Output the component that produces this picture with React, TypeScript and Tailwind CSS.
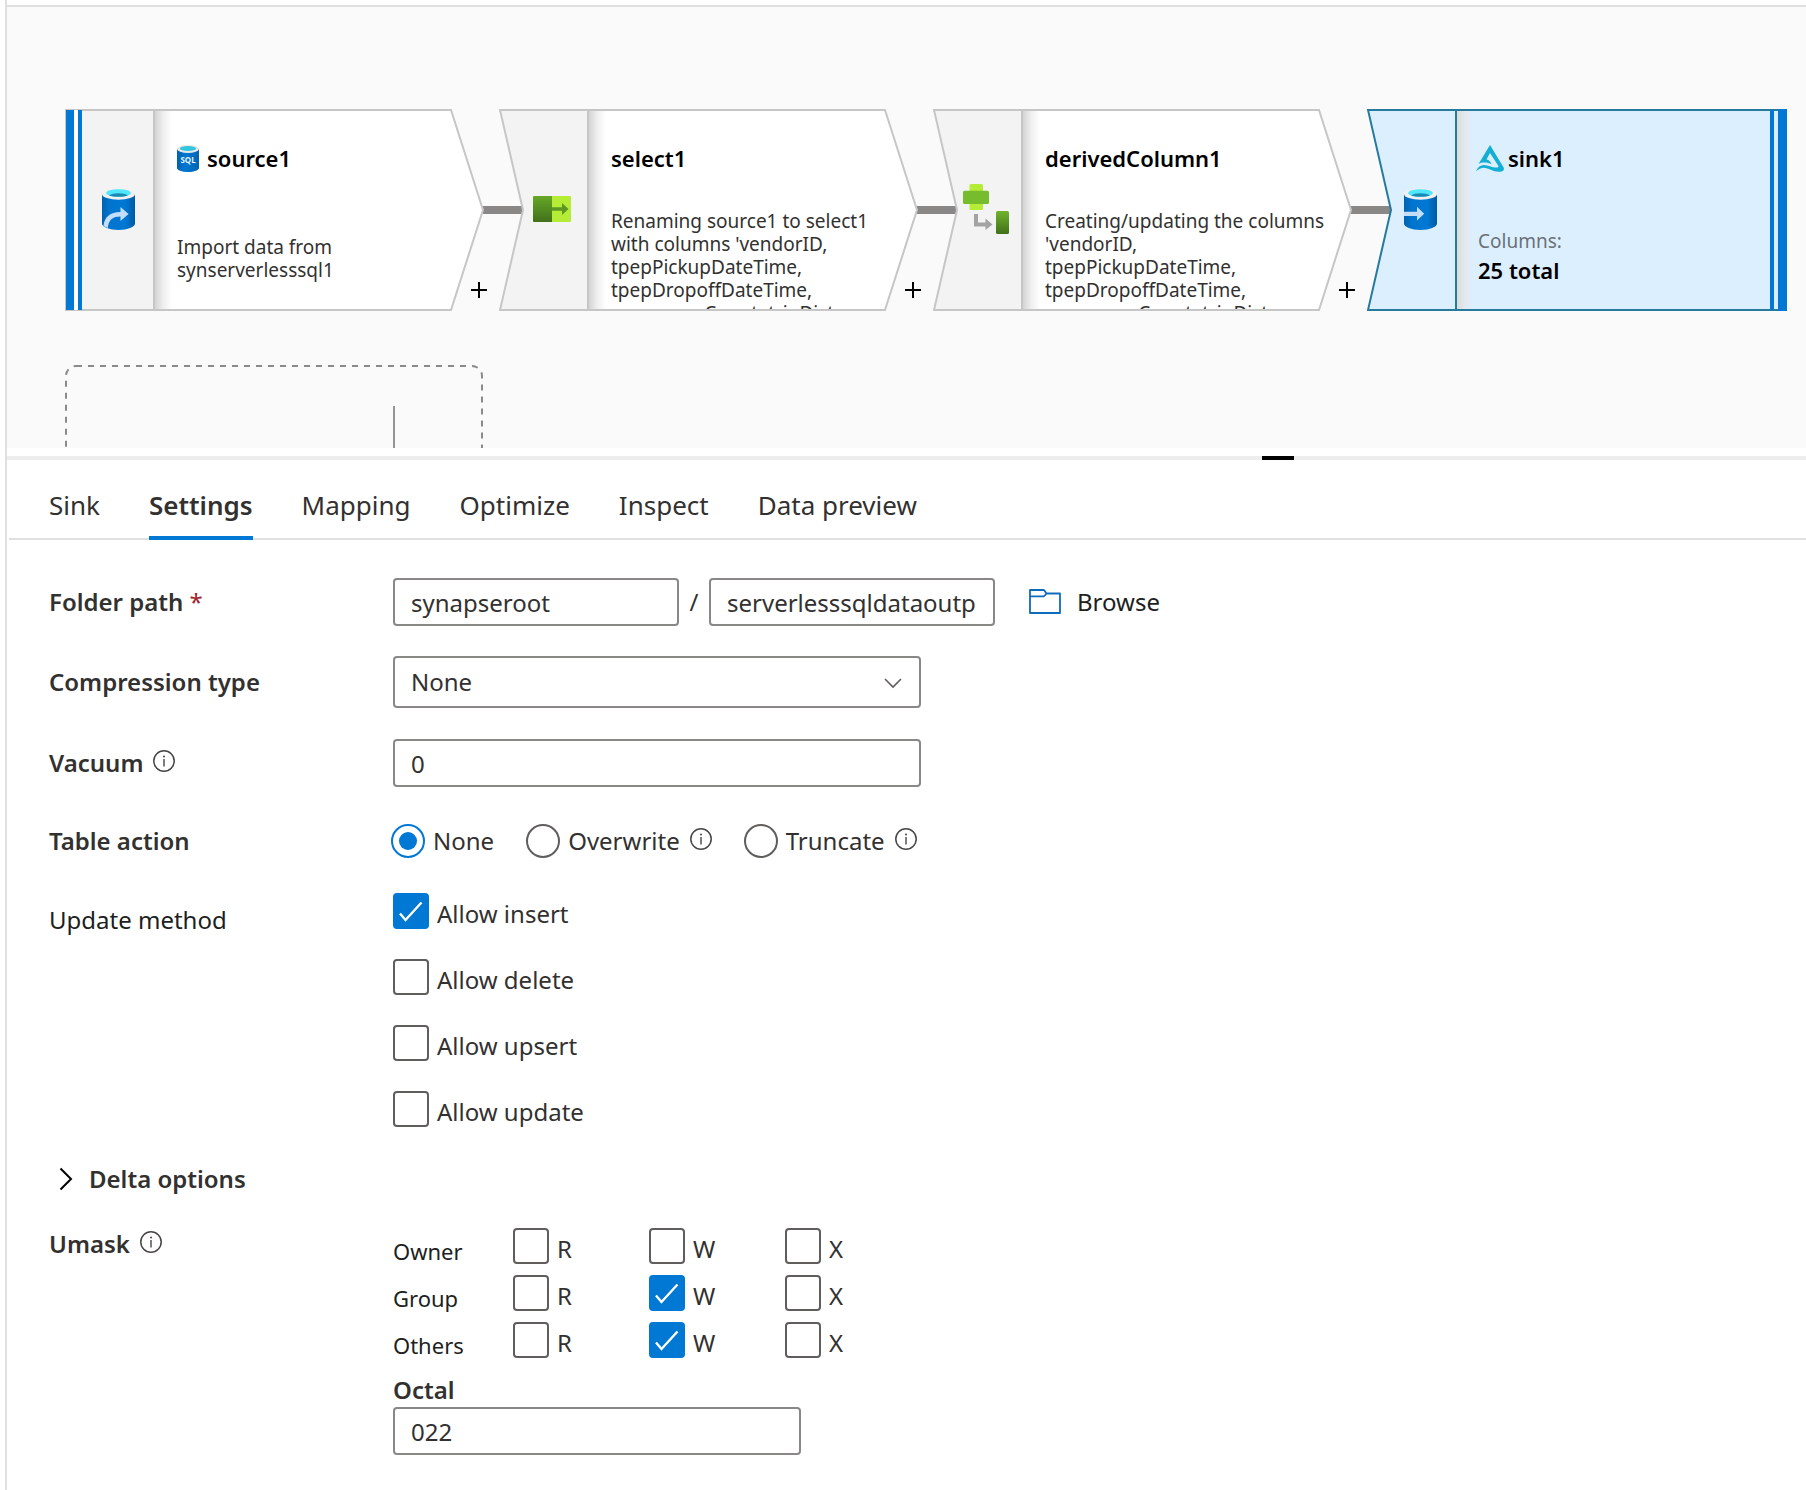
import { useState } from "react";
import type { ReactNode } from "react";

type NodeShape = "source" | "step" | "sink";

function Cylinder({ children, id }: { children: ReactNode; id: string }) {
  return (
    <svg width="33" height="42" viewBox="0 0 33 42" aria-hidden="true">
      <defs>
        <linearGradient id={id} x1="0" x2="1" y1="0" y2="0">
          <stop offset="0" stopColor="#0062b0" />
          <stop offset="0.25" stopColor="#0075cf" />
          <stop offset="0.7" stopColor="#0078d4" />
          <stop offset="1" stopColor="#005ba1" />
        </linearGradient>
      </defs>
      <path d="M0 6v29.5C0 39 7.4 42 16.500 42S33 39 33 35.500V6z" fill={`url(#${id})`} />
      <ellipse cx="16.5" cy="6" rx="16.5" ry="5.800" fill="#f0f0f0" />
      <ellipse cx="16.5" cy="5" rx="12.300" ry="3.800" fill="#50e6ff" />
      <path d="M7 7.400c2-1.400 5.500-2.200 9.500-2.200s7.500.8 9.500 2.200c-2.200.9-5.600 1.400-9.500 1.400S9.200 8.300 7 7.400z" fill="#198ab3" />
      {children}
    </svg>
  );
}

function SourceIcon() {
  return (
    <Cylinder id="cyl-source">
      <path d="M1.500 38C2.500 29 8 24 18.500 24v-5l8 7-8 7v-4.600C11 28.400 6.500 31.500 5.800 40z" fill="#c3defa" />
    </Cylinder>
  );
}

function SinkIcon() {
  return (
    <Cylinder id="cyl-sink">
      <path d="M0 23.700h13v-4.900l7.200 7-7.200 6.800v-4.700H0z" fill="#c3defa" />
    </Cylinder>
  );
}

function SelectIcon() {
  return (
    <svg width="38" height="26" viewBox="0 0 38 26" aria-hidden="true">
      <defs>
        <linearGradient id="sel-dark" x1="0" x2="0" y1="0" y2="1">
          <stop offset="0" stopColor="#67a827" />
          <stop offset="1" stopColor="#41701a" />
        </linearGradient>
      </defs>
      <path d="M18 0h19a1 1 0 0 1 1 1v24a1 1 0 0 1-1 1H18z" fill="#b4ec36" />
      <path d="M1 0h18v26H1a1 1 0 0 1-1-1V1a1 1 0 0 1 1-1z" fill="url(#sel-dark)" />
      <path d="M19 11.200h10V7l6.500 6-6.500 6v-4.200H19z" fill="#5e9624" />
    </svg>
  );
}

function DerivedIcon() {
  return (
    <svg width="46" height="50" viewBox="0 0 46 50" aria-hidden="true">
      <defs>
        <linearGradient id="der-dark" x1="0" x2="0" y1="0" y2="1">
          <stop offset="0" stopColor="#70b32b" />
          <stop offset="1" stopColor="#41701a" />
        </linearGradient>
      </defs>
      <rect x="6.500" width="13.500" height="26" rx="1.500" fill="#b4ec36" />
      <rect y="6.800" width="26" height="13.200" rx="1.500" fill="#76bc2d" />
      <path d="M11 30h4v8.500h7.500v-4l7 6-7 5.500v-3.500H11z" fill="#a3a3a3" />
      <rect x="33" y="27" width="13" height="23" rx="1.500" fill="url(#der-dark)" />
    </svg>
  );
}

function SqlIcon() {
  return (
    <svg width="22" height="27" viewBox="0 0 22 27" aria-hidden="true">
      <defs>
        <linearGradient id="sql-body" x1="0" x2="1" y1="0" y2="0">
          <stop offset="0" stopColor="#0062b0" />
          <stop offset="0.4" stopColor="#0078d4" />
          <stop offset="1" stopColor="#0062b0" />
        </linearGradient>
      </defs>
      <path d="M0 4v19c0 2.200 4.900 4 11 4s11-1.800 11-4V4z" fill="url(#sql-body)" />
      <ellipse cx="11" cy="4" rx="11" ry="4" fill="#e8e8e8" />
      <ellipse cx="11" cy="3.600" rx="8.200" ry="2.500" fill="#32c5e0" />
      <text x="11" y="18" textAnchor="middle" fontSize="8" fontWeight="700" fill="#e6f2fb">
        SQL
      </text>
    </svg>
  );
}

function DeltaIcon() {
  return (
    <svg width="28" height="27" viewBox="0 0 28 27" aria-hidden="true">
      <path
        d="M14 0l13.500 22.200c1.200 2.500 0 4-3.500 4.500-6 .8-12-4.200-16.500-3.900C4 23 2 25 0 26.200 1.800 22 4.500 19.900 8 19.900c4.500 0 8 3 12.500 2.700 1.800-.1 2.300-.9 1.600-2.100L14 8l-3.500 6.500c2 .1 3.500 1.500 5 4.500C12 17.500 6 16.500 2.500 19z"
        fill="#12aed4"
      />
    </svg>
  );
}

function InfoIcon() {
  return (
    <svg width="22" height="22" viewBox="0 0 22 22" className="mb-1 shrink-0" role="img" aria-label="Information">
      <circle cx="11" cy="11" r="10.200" fill="none" stroke="#484644" strokeWidth="1.500" />
      <circle cx="11" cy="6.400" r="1" fill="#484644" />
      <path d="M11 9v7.500" stroke="#484644" strokeWidth="1.400" />
    </svg>
  );
}

const outlines: Record<NodeShape, { side: string; main: string }> = {
  source: { side: "M1 1H89V201H1z", main: "M89 1H386L418 101L386 201H89z" },
  step: { side: "M1 1H89V201H1L24 101z", main: "M89 1H386L418 101L386 201H89z" },
  sink: { side: "M1 1H89V201H1L24 101z", main: "M89 1H419V201H89z" },
};

function FlowNode({
  shape,
  left,
  icon,
  titleIcon,
  title,
  children,
}: {
  shape: NodeShape;
  left: string;
  icon: ReactNode;
  titleIcon?: ReactNode;
  title: string;
  children: ReactNode;
}) {
  const sink = shape === "sink";
  const stroke = sink ? "#267a9e" : "#c6c6c6";
  return (
    <article className={`absolute top-[102px] h-[202px] w-[420px] ${left}`}>
      <svg className="absolute inset-0" width="420" height="202" viewBox="0 0 420 202" aria-hidden="true">
        <defs>
          <linearGradient id={`shade-${title}`} x1="0" x2="1" y1="0" y2="0">
            <stop offset="0" stopColor={sink ? "#dcdcd8" : "#d4d4d4"} />
            <stop offset="0.5" stopColor={sink ? "#e3eaf0" : "#f0f0f0"} />
            <stop offset="1" stopColor={sink ? "#dcefff" : "#ffffff"} />
          </linearGradient>
        </defs>
        <path d={outlines[shape].main} fill={sink ? "#dcefff" : "#ffffff"} stroke={stroke} strokeWidth="2" />
        <rect x="90" y="2" width="17" height="198" fill={`url(#shade-${title})`} />
        <path d={outlines[shape].side} fill={sink ? "#dcefff" : "#f3f3f3"} stroke={stroke} strokeWidth="2" />
        {shape === "source" && (
          <>
            <path d="M1 1h16v200H1z" fill="#ffffff" />
            <path d="M1 1h8v200H1zM13 1h4v200h-4z" fill="#0078d4" />
          </>
        )}
        {sink && <path d="M403 1h4v200h-4zM411 0h9v202h-9z" fill="#0078d4" />}
      </svg>
      <div className="relative flex h-full">
        <div className="flex w-[90px] items-center justify-center pb-0.5 pl-4">{icon}</div>
        <div className={`flex h-[200px] flex-1 flex-col overflow-hidden pt-[33px] ${sink ? "pl-[19px]" : "pl-[22px]"}`}>
          <h2
            className={`flex h-8 shrink-0 items-center text-[22px] font-semibold text-black ${sink ? "gap-1" : "gap-2"}`}
          >
            {titleIcon}
            {title}
          </h2>
          {children}
        </div>
      </div>
    </article>
  );
}

function Connector({ left }: { left: string }) {
  return <div className={`absolute top-[199px] h-2 w-10 bg-[#8a8886] ${left}`} />;
}

function AddButton({ left, label }: { left: string; label: string }) {
  return (
    <button type="button" aria-label={label} className={`absolute top-[275px] ${left}`}>
      <svg width="16" height="16" viewBox="0 0 16 16" aria-hidden="true">
        <path d="M8 0v16M0 8h16" stroke="#000" strokeWidth="2" />
      </svg>
    </button>
  );
}

function Canvas() {
  return (
    <section aria-label="Data flow" className="relative h-[441px] overflow-hidden bg-[#fafafa]">
      <Connector left="left-[476px]" />
      <Connector left="left-[910px]" />
      <Connector left="left-[1344px]" />
      <FlowNode shape="source" left="left-[58px]" icon={<SourceIcon />} titleIcon={<SqlIcon />} title="source1">
        <p className="mt-[62px] text-[19px] leading-[23px] text-[#323130]">
          Import data from
          <br />
          synserverlesssql1
        </p>
      </FlowNode>
      <FlowNode shape="step" left="left-[492px]" icon={<SelectIcon />} title="select1">
        <p className="mt-9 w-72 text-[19px] leading-[23px] text-[#323130]">
          Renaming source1 to select1
          <br />
          with columns 'vendorID,
          <br />
          tpepPickupDateTime,
          <br />
          tpepDropoffDateTime,
          <br />
          passengerCount, tripDistance,
        </p>
      </FlowNode>
      <FlowNode shape="step" left="left-[926px]" icon={<DerivedIcon />} title="derivedColumn1">
        <p className="mt-9 w-72 text-[19px] leading-[23px] text-[#323130]">
          Creating/updating the columns
          <br />
          'vendorID,
          <br />
          tpepPickupDateTime,
          <br />
          tpepDropoffDateTime,
          <br />
          passengerCount, tripDistance,
        </p>
      </FlowNode>
      <FlowNode shape="sink" left="left-[1360px]" icon={<SinkIcon />} titleIcon={<DeltaIcon />} title="sink1">
        <p className="mt-[55px] pl-0.5 text-[19px] leading-6 text-[#6b7176]">Columns:</p>
        <p className="pl-0.5 text-[22px] font-semibold leading-[34px] text-black">25 total</p>
      </FlowNode>
      <AddButton left="left-[464px]" label="Add after source1" />
      <AddButton left="left-[898px]" label="Add after select1" />
      <AddButton left="left-[1332px]" label="Add after derivedColumn1" />
      <svg className="absolute left-[58px] top-[357px]" width="420" height="84" viewBox="0 0 420 84" aria-hidden="true">
        <rect x="1" y="2" width="416" height="140" rx="10" fill="none" stroke="#8a8a8a" strokeWidth="2" strokeDasharray="6 6" />
        <path d="M329 42V84" stroke="#979593" strokeWidth="2" />
      </svg>
    </section>
  );
}

const tabs = ["Sink", "Settings", "Mapping", "Optimize", "Inspect", "Data preview"];

function Tabs() {
  const [active, setActive] = useState("Settings");
  return (
    <div role="tablist" className="ml-0.5 flex gap-[49px] border-b-2 border-[#e0e0e0] pl-10">
      {tabs.map((tab) => (
        <button
          key={tab}
          type="button"
          role="tab"
          aria-selected={tab === active}
          onClick={() => setActive(tab)}
          className={
            tab === active
              ? "-mb-0.5 h-20 whitespace-nowrap border-b-4 border-[#0078d4] pt-3.5 text-[26px] font-semibold"
              : "-mb-0.5 h-20 whitespace-nowrap border-b-4 border-transparent pt-3.5 text-[26px]"
          }
        >
          {tab}
        </button>
      ))}
    </div>
  );
}

function CheckBox({ label, name, defaultChecked = false }: { label: string; name: string; defaultChecked?: boolean }) {
  return (
    <label className="flex h-9 items-center gap-2">
      <span className="relative flex size-9 shrink-0">
        <input
          type="checkbox"
          name={name}
          defaultChecked={defaultChecked}
          className="peer size-9 appearance-none rounded-[4px] border-2 border-[#605e5c] bg-white checked:border-[#0078d4] checked:bg-[#0078d4]"
        />
        <svg
          className="pointer-events-none absolute inset-0 hidden peer-checked:block"
          width="36"
          height="36"
          viewBox="0 0 36 36"
          aria-hidden="true"
        >
          <path d="M7 20.500l5.500 6.500L28.500 9.500" fill="none" stroke="#fff" strokeWidth="2.400" />
        </svg>
      </span>
      <span className="pt-1.5">{label}</span>
    </label>
  );
}

function Radio({ label, info = false, defaultChecked = false }: { label: string; info?: boolean; defaultChecked?: boolean }) {
  return (
    <div className="flex items-center gap-2.5">
      <label className="flex items-center gap-2">
        <span className="relative flex size-[34px] shrink-0 items-center justify-center">
          <input
            type="radio"
            name="tableAction"
            defaultChecked={defaultChecked}
            className="peer size-[34px] appearance-none rounded-full border-2 border-[#605e5c] bg-white checked:border-[#0078d4]"
          />
          <span className="pointer-events-none absolute hidden size-[18px] rounded-full bg-[#0078d4] peer-checked:block" />
        </span>
        {label}
      </label>
      {info && <InfoIcon />}
    </div>
  );
}

const row = "grid grid-cols-[344px_1fr]";
const field = "h-12 rounded-[4px] border-2 border-[#8a8886] bg-white px-4 text-[#323130]";

function SettingsForm() {
  return (
    <form className="flex flex-col pl-[42px] pt-[38px] text-[24px] leading-8 text-[#323130]">
      <div className={`${row} items-center`}>
        <label htmlFor="container" className="font-semibold">
          Folder path <span className="font-normal text-[#a4262c]">*</span>
        </label>
        <div className="flex items-center">
          <input id="container" defaultValue="synapseroot" className={`${field} w-[286px]`} />
          <span className="w-[30px] text-center">/</span>
          <input aria-label="Directory" defaultValue="serverlesssqldataoutput" className={`${field} w-[286px]`} />
          <button type="button" className="ml-[34px] flex items-center gap-4 text-[#201f1e]">
            <svg
              className="mb-0.5"
              width="32"
              height="25"
              viewBox="0 0 32 25"
              fill="none"
              stroke="#0f6cbd"
              strokeWidth="1.800"
              strokeLinejoin="round"
              aria-hidden="true"
            >
              <path d="M1 1h13.500c1.500 0 2 3.500 3.500 3.500h13V24H1zM1 7.300h13.500c1.500 0 2-2.800 3.500-2.800" />
            </svg>
            Browse
          </button>
        </div>
      </div>

      <div className={`${row} mt-[30px] items-center`}>
        <label htmlFor="compression" className="font-semibold">
          Compression type
        </label>
        <div className="relative w-[528px]">
          <select
            id="compression"
            className="h-[52px] w-full appearance-none rounded-[4px] border-2 border-[#8a8886] bg-white px-4"
          >
            <option>None</option>
          </select>
          <svg
            className="pointer-events-none absolute right-[19px] top-[22px]"
            width="18"
            height="11"
            viewBox="0 0 18 11"
            aria-hidden="true"
          >
            <path d="M1 1l8 8 8-8" fill="none" stroke="#605e5c" strokeWidth="1.600" />
          </svg>
        </div>
      </div>

      <div className={`${row} mt-[31px] items-center`}>
        <div className="flex items-center gap-2.5">
          <label htmlFor="vacuum" className="font-semibold">
            Vacuum
          </label>
          <InfoIcon />
        </div>
        <input id="vacuum" defaultValue="0" className={`${field} w-[528px]`} />
      </div>

      <div role="radiogroup" aria-labelledby="table-action" className={`${row} mt-[37px] items-center`}>
        <span id="table-action" className="font-semibold">
          Table action
        </span>
        <div className="-ml-0.5 flex gap-8">
          <Radio label="None" defaultChecked />
          <Radio label="Overwrite" info />
          <Radio label="Truncate" info />
        </div>
      </div>

      <div role="group" aria-labelledby="update-method" className={`${row} mt-[35px]`}>
        <span id="update-method" className="pt-[11px] text-[#201f1e]">
          Update method
        </span>
        <div className="flex flex-col items-start gap-[30px]">
          <CheckBox name="insert" label="Allow insert" defaultChecked />
          <CheckBox name="delete" label="Allow delete" />
          <CheckBox name="upsert" label="Allow upsert" />
          <CheckBox name="update" label="Allow update" />
        </div>
      </div>

      <button type="button" aria-expanded="false" className="mt-9 flex items-center gap-4 self-start pl-2.5 font-semibold">
        <svg width="14" height="24" viewBox="0 0 14 24" aria-hidden="true">
          <path d="M1.500 1.500L12 12 1.500 22.500" fill="none" stroke="#000" strokeWidth="2" />
        </svg>
        Delta options
      </button>

      <div className={`${row} mt-[33px]`}>
        <div className="flex items-center gap-2.5 self-start">
          <span className="font-semibold">Umask</span>
          <InfoIcon />
        </div>
        <div className="flex flex-col items-start">
          <div className="flex flex-col gap-[11px]">
            {["Owner", "Group", "Others"].map((who) => (
              <div key={who} role="group" aria-label={who} className="grid h-9 grid-cols-[120px_136px_136px_80px]">
                <span className="pt-[7px] text-[22px] text-[#201f1e]">{who}</span>
                <CheckBox name={`${who}-r`} label="R" />
                <CheckBox name={`${who}-w`} label="W" defaultChecked={who !== "Owner"} />
                <CheckBox name={`${who}-x`} label="X" />
              </div>
            ))}
          </div>
          <label htmlFor="octal" className="mb-px mt-4 font-semibold">
            Octal
          </label>
          <input id="octal" defaultValue="022" className={`${field} w-[408px]`} />
        </div>
      </div>
    </form>
  );
}

export default function App() {
  return (
    <div className="min-h-screen bg-white pl-[5px] font-['Noto_Sans','Open_Sans',sans-serif] text-[#323130]">
      <main className="min-h-screen border-l-2 border-[#e0e0e0] pt-[5px]">
        <div className="border-t-2 border-[#e0e0e0]">
          <Canvas />
        </div>
        <div role="separator" aria-label="Resize panel" className="mt-2 h-1 bg-[#ededed] pl-[1255px]">
          <div className="h-1 w-8 bg-black" />
        </div>
        <Tabs />
        <SettingsForm />
      </main>
    </div>
  );
}
